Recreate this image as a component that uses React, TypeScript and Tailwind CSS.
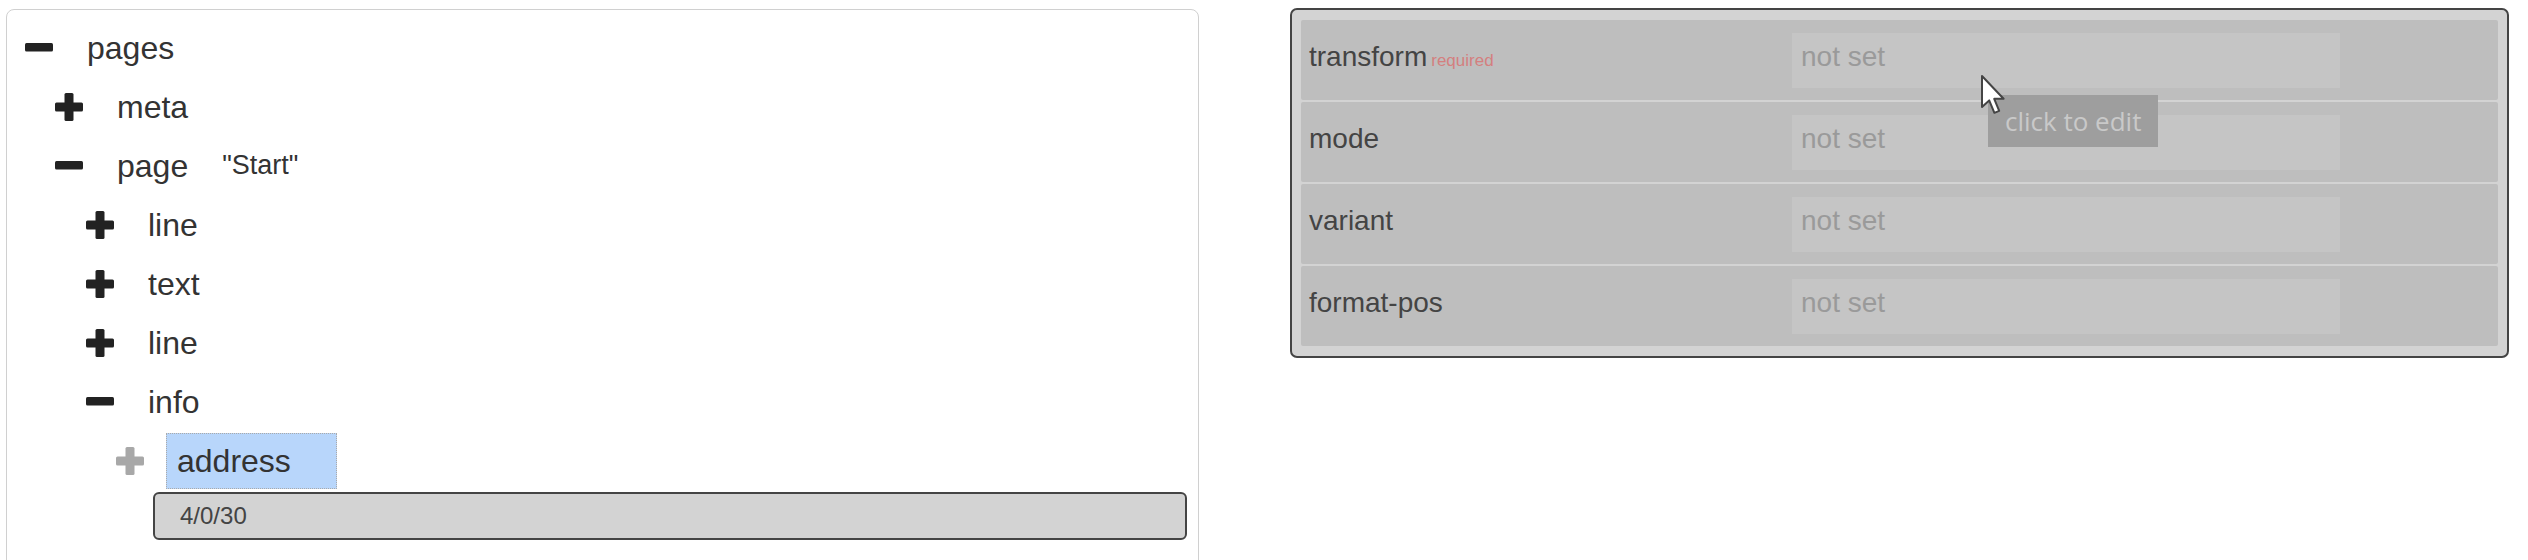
import React from 'react';

type Node = {
  level: number;
  icon: 'plus' | 'minus';
  label: string;
  extra?: string;
  selected?: boolean;
};

const tree: Node[] = [
  { level: 0, icon: 'minus', label: 'pages' },
  { level: 1, icon: 'plus', label: 'meta' },
  { level: 1, icon: 'minus', label: 'page', extra: '"Start"' },
  { level: 2, icon: 'plus', label: 'line' },
  { level: 2, icon: 'plus', label: 'text' },
  { level: 2, icon: 'plus', label: 'line' },
  { level: 2, icon: 'minus', label: 'info' },
  { level: 3, icon: 'plus', label: 'address', selected: true },
];

const indent = ['pl-0', 'pl-[30px]', 'pl-[61px]', 'pl-[91px]'];

const props = [
  { name: 'transform', required: true },
  { name: 'mode' },
  { name: 'variant' },
  { name: 'format-pos' },
];

function PlusIcon({ muted }: { muted?: boolean }) {
  return (
    <svg width="28" height="28" viewBox="0 0 28 28" className={muted ? 'text-[#a8a8a8]' : 'text-[#222]'}>
      <rect x="0" y="9.5" width="28" height="9" rx="1.5" fill="currentColor" />
      <rect x="9.5" y="0" width="9" height="28" rx="1.5" fill="currentColor" />
    </svg>
  );
}

function MinusIcon() {
  return (
    <svg width="28" height="28" viewBox="0 0 28 28" className="text-[#222]">
      <rect x="0" y="9" width="28" height="8.5" rx="1.5" fill="currentColor" />
    </svg>
  );
}

function TreeRow({ node }: { node: Node }) {
  return (
    <div className={`flex h-[59px] items-center ${indent[node.level]}`}>
      <div className="flex w-[28px] shrink-0 items-center justify-center">
        {node.icon === 'plus' ? <PlusIcon muted={node.selected} /> : <MinusIcon />}
      </div>
      {node.selected ? (
        <div className="ml-[22px] flex h-[56px] w-[171px] items-center border border-dotted border-[#aaaaaa] bg-[#b8d6fb] px-[10px] text-[32px] text-[#333]">
          {node.label}
        </div>
      ) : (
        <span className="ml-[34px] text-[32px] text-[#333]">{node.label}</span>
      )}
      {node.extra && <span className="ml-[34px] text-[27px] text-[#333]">{node.extra}</span>}
    </div>
  );
}

export default function App() {
  return (
    <div className="flex h-[560px] w-[2528px] items-start overflow-hidden bg-white pl-[6px] pt-[9px] font-['Liberation_Sans',Arial,sans-serif]">
      {/* tree */}
      <div className="h-[600px] w-[1193px] shrink-0 rounded-[8px] border border-[#d0d0d0] pl-[18px] pt-[8px]">
        {tree.map((n, i) => (
          <TreeRow key={i} node={n} />
        ))}
        <div className="ml-[128px] mt-[2px] flex h-[48px] w-[1034px] items-center rounded-[6px] border-2 border-[#444] bg-[#d3d3d3] pl-[25px] text-[24px] text-[#444]">
          4/0/30
        </div>
      </div>

      {/* properties */}
      <div className="relative -mt-[1px] ml-[91px] w-[1219px] shrink-0 rounded-[7px] border-2 border-[#444] bg-[#d3d3d3] px-[9px] py-[10px]">
        <div className="flex flex-col gap-[2px]">
          {props.map((p) => (
            <div key={p.name} className="flex h-[80px] items-center rounded-[2px] bg-[#bebebe] pl-[8px]">
              <div className="flex w-[483px] shrink-0 items-baseline pb-[6px]">
                <span className="text-[28px] text-[#444]">{p.name}</span>
                {p.required && <span className="ml-[4px] text-[17px] text-[#d47f7f]">required</span>}
              </div>
              <div className="flex h-[55px] w-[548px] items-center bg-[#c5c5c5] pb-[6px] pl-[9px] text-[28px] text-[#9a9a9a]">
                not set
              </div>
            </div>
          ))}
        </div>

        <div className="absolute left-[696px] top-[85px] flex h-[52px] w-[170px] items-center bg-[#9e9e9e] pl-[17px] font-['Open_Sans',sans-serif] text-[26px] text-[#c9c9c9]">
          click to edit
        </div>
        <svg className="absolute left-[688px] top-[64px]" width="26" height="42" viewBox="0 0 13 21">
          <path d="M1 1 L1 16.5 L4.6 13.2 L7.2 19.4 L9.6 18.4 L7.1 12.4 L11.8 12.4 Z" fill="#fff" stroke="#444" strokeWidth="1" strokeLinejoin="round" />
        </svg>
      </div>
    </div>
  );
}
